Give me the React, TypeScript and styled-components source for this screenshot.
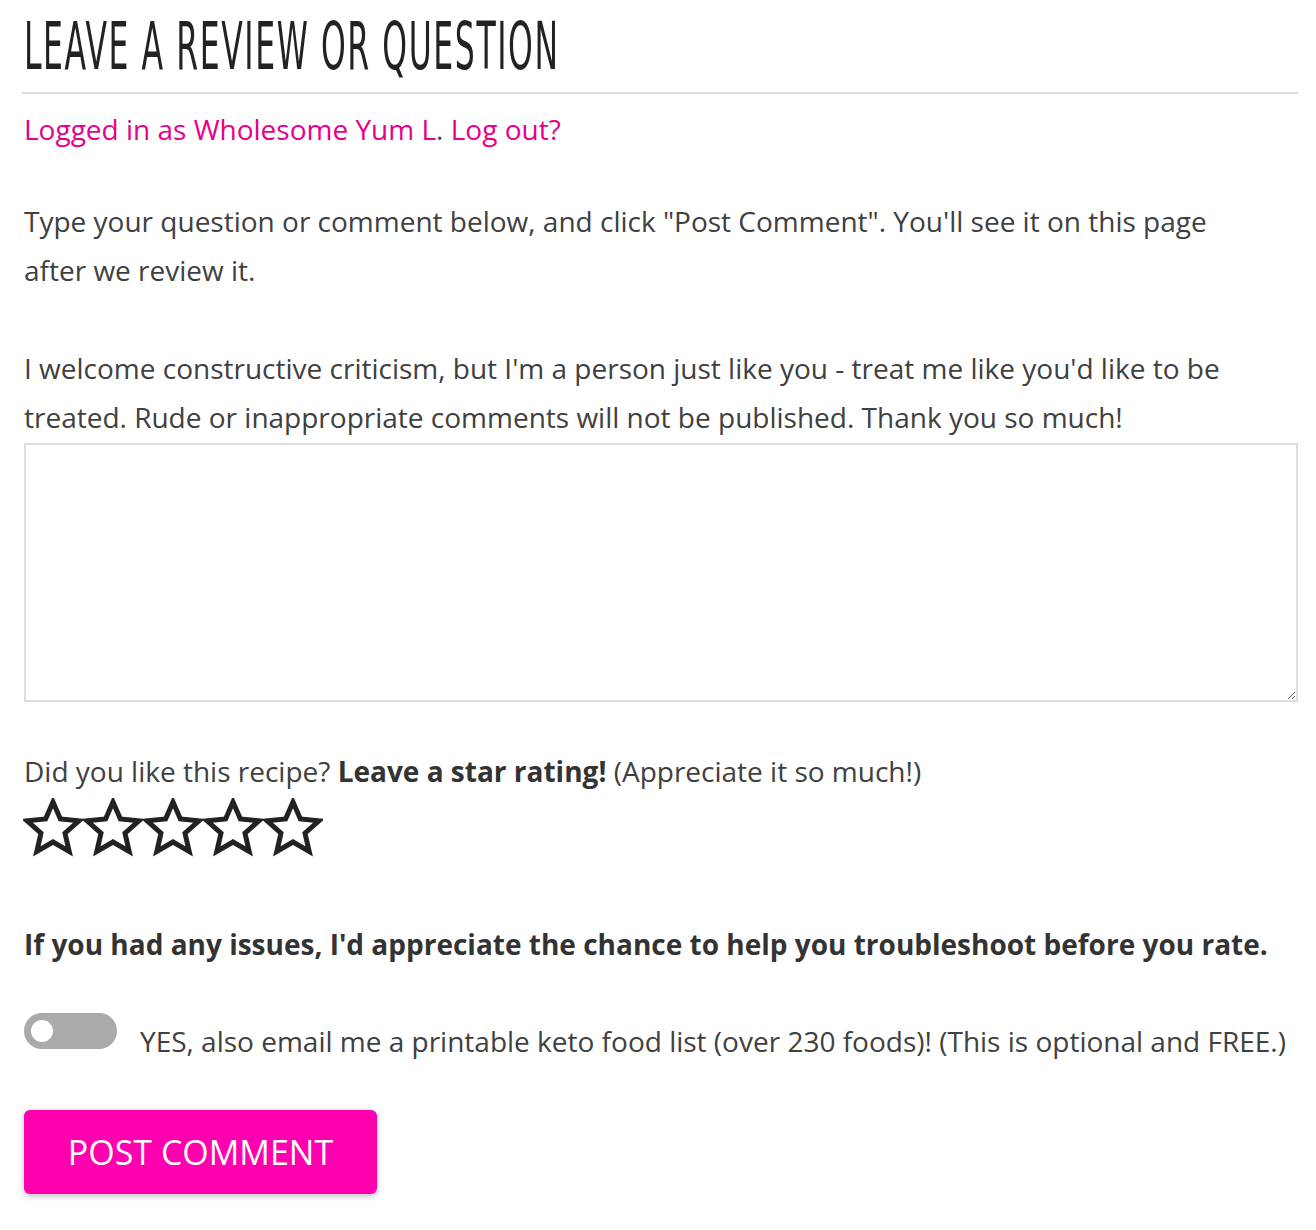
import styled, { createGlobalStyle } from "styled-components";

const GlobalStyle = createGlobalStyle`
  html, body {
    margin: 0;
    padding: 0;
    background: #ffffff;
  }
  body {
    font-family: "Open Sans", "Liberation Sans", sans-serif;
    color: #3b3b3b;
  }
`;

export default function App() {
  return (
    <>
      <GlobalStyle />
      <Section>
        <Heading>
          <HeadingText>LEAVE A REVIEW OR QUESTION</HeadingText>
        </Heading>
        <Divider />
        <LoggedIn>
          <PinkLink href="#">Logged in as Wholesome Yum L</PinkLink>.{" "}
          <PinkLink href="#">Log out?</PinkLink>
        </LoggedIn>
        <Paragraph>
          Type your question or comment below, and click "Post Comment". You'll
          see it on this page after we review it.
        </Paragraph>
        <Paragraph $tight>
          I welcome constructive criticism, but I'm a person just like you -
          treat me like you'd like to be treated. Rude or inappropriate comments
          will not be published. Thank you so much!
        </Paragraph>
        <CommentBox />
        <RatingLabel>
          Did you like this recipe? <strong>Leave a star rating!</strong>{" "}
          (Appreciate it so much!)
        </RatingLabel>
        <Stars>
          {[1, 2, 3, 4, 5].map((n) => (
            <StarIcon key={n} viewBox="0 0 60 60">
              <path d="M30 4 L37.4 21 L56 22.8 L42 35.2 L46.2 53.5 L30 44 L13.8 53.5 L18 35.2 L4 22.8 L22.6 21 Z" />
            </StarIcon>
          ))}
        </Stars>
        <Notice>
          If you had any issues, I'd appreciate the chance to help you
          troubleshoot before you rate.
        </Notice>
        <OptInRow>
          <Toggle>
            <Knob />
          </Toggle>
          <OptInText>
            YES, also email me a printable keto food list (over 230 foods)!
            (This is optional and FREE.)
          </OptInText>
        </OptInRow>
        <PostButton>POST COMMENT</PostButton>
      </Section>
    </>
  );
}

const Section = styled.div`
  display: flex;
  flex-direction: column;
  align-items: flex-start;
  padding: 11px 18px 30px 24px;
  width: 1274px;
`;

const Heading = styled.h2`
  margin: 0;
  height: 72px;
  overflow: visible;
  white-space: nowrap;
`;

const HeadingText = styled.span`
  display: inline-block;
  font-family: "Liberation Sans Narrow", "DejaVu Sans Condensed", "Liberation Sans", sans-serif;
  font-weight: 400;
  font-size: 66px;
  line-height: 72px;
  color: #222222;
  transform: scaleX(0.53);
  transform-origin: left center;
  letter-spacing: 3px;
`;

const Divider = styled.div`
  align-self: stretch;
  height: 2px;
  background: #dddddd;
  margin: 9px 0 0 -2px;
`;

const LoggedIn = styled.p`
  margin: 12px 0 0;
  font-size: 28px;
  line-height: 46px;
  color: #444444;
`;

const PinkLink = styled.a`
  color: #e8008a;
  text-decoration: none;
`;

const Paragraph = styled.p<{ $tight?: boolean }>`
  margin: ${(p) => (p.$tight ? "49px 0 0" : "45px 0 0")};
  max-width: 1210px;
  font-size: 28px;
  line-height: 49px;
  color: #404040;
`;

const CommentBox = styled.textarea`
  display: block;
  box-sizing: border-box;
  width: 1274px;
  height: 259px;
  margin: 1px 0 0;
  border: 2px solid #dddddd;
  background: #ffffff;
  resize: vertical;
  font-family: "Open Sans", "Liberation Sans", sans-serif;
  font-size: 20px;
`;

const RatingLabel = styled.p`
  margin: 51px 0 0;
  font-size: 28px;
  line-height: 36px;
  color: #404040;

  strong {
    font-weight: 700;
    color: #333333;
  }
`;

const Stars = styled.div`
  display: flex;
  margin: 9px 0 0 -1px;
`;

const StarIcon = styled.svg`
  width: 60px;
  height: 60px;
  fill: none;
  stroke: #222222;
  stroke-width: 5;
  stroke-linejoin: miter;
`;

const Notice = styled.p`
  margin: 68px 0 0;
  font-size: 28px;
  font-weight: 700;
  line-height: 36px;
  color: #333333;
`;

const OptInRow = styled.div`
  display: flex;
  align-items: flex-start;
  gap: 23px;
  margin: 51px 0 0;
`;

const Toggle = styled.div`
  position: relative;
  flex: none;
  width: 93px;
  height: 36px;
  border-radius: 18px;
  background: #aaaaaa;
`;

const Knob = styled.span`
  position: absolute;
  left: 7px;
  top: 7px;
  width: 22px;
  height: 22px;
  border-radius: 50%;
  background: #ffffff;
`;

const OptInText = styled.span`
  margin-top: 10px;
  font-size: 28px;
  line-height: 36px;
  color: #404040;
  white-space: nowrap;
`;

const PostButton = styled.button`
  margin: 51px 0 0;
  width: 353px;
  height: 84px;
  border: none;
  border-radius: 6px;
  background: #ff00ae;
  box-shadow: 0 2px 6px rgba(0, 0, 0, 0.25);
  color: #ffffff;
  font-family: "Open Sans", "Liberation Sans", sans-serif;
  font-size: 34px;
  font-weight: 400;
  cursor: pointer;
`;
